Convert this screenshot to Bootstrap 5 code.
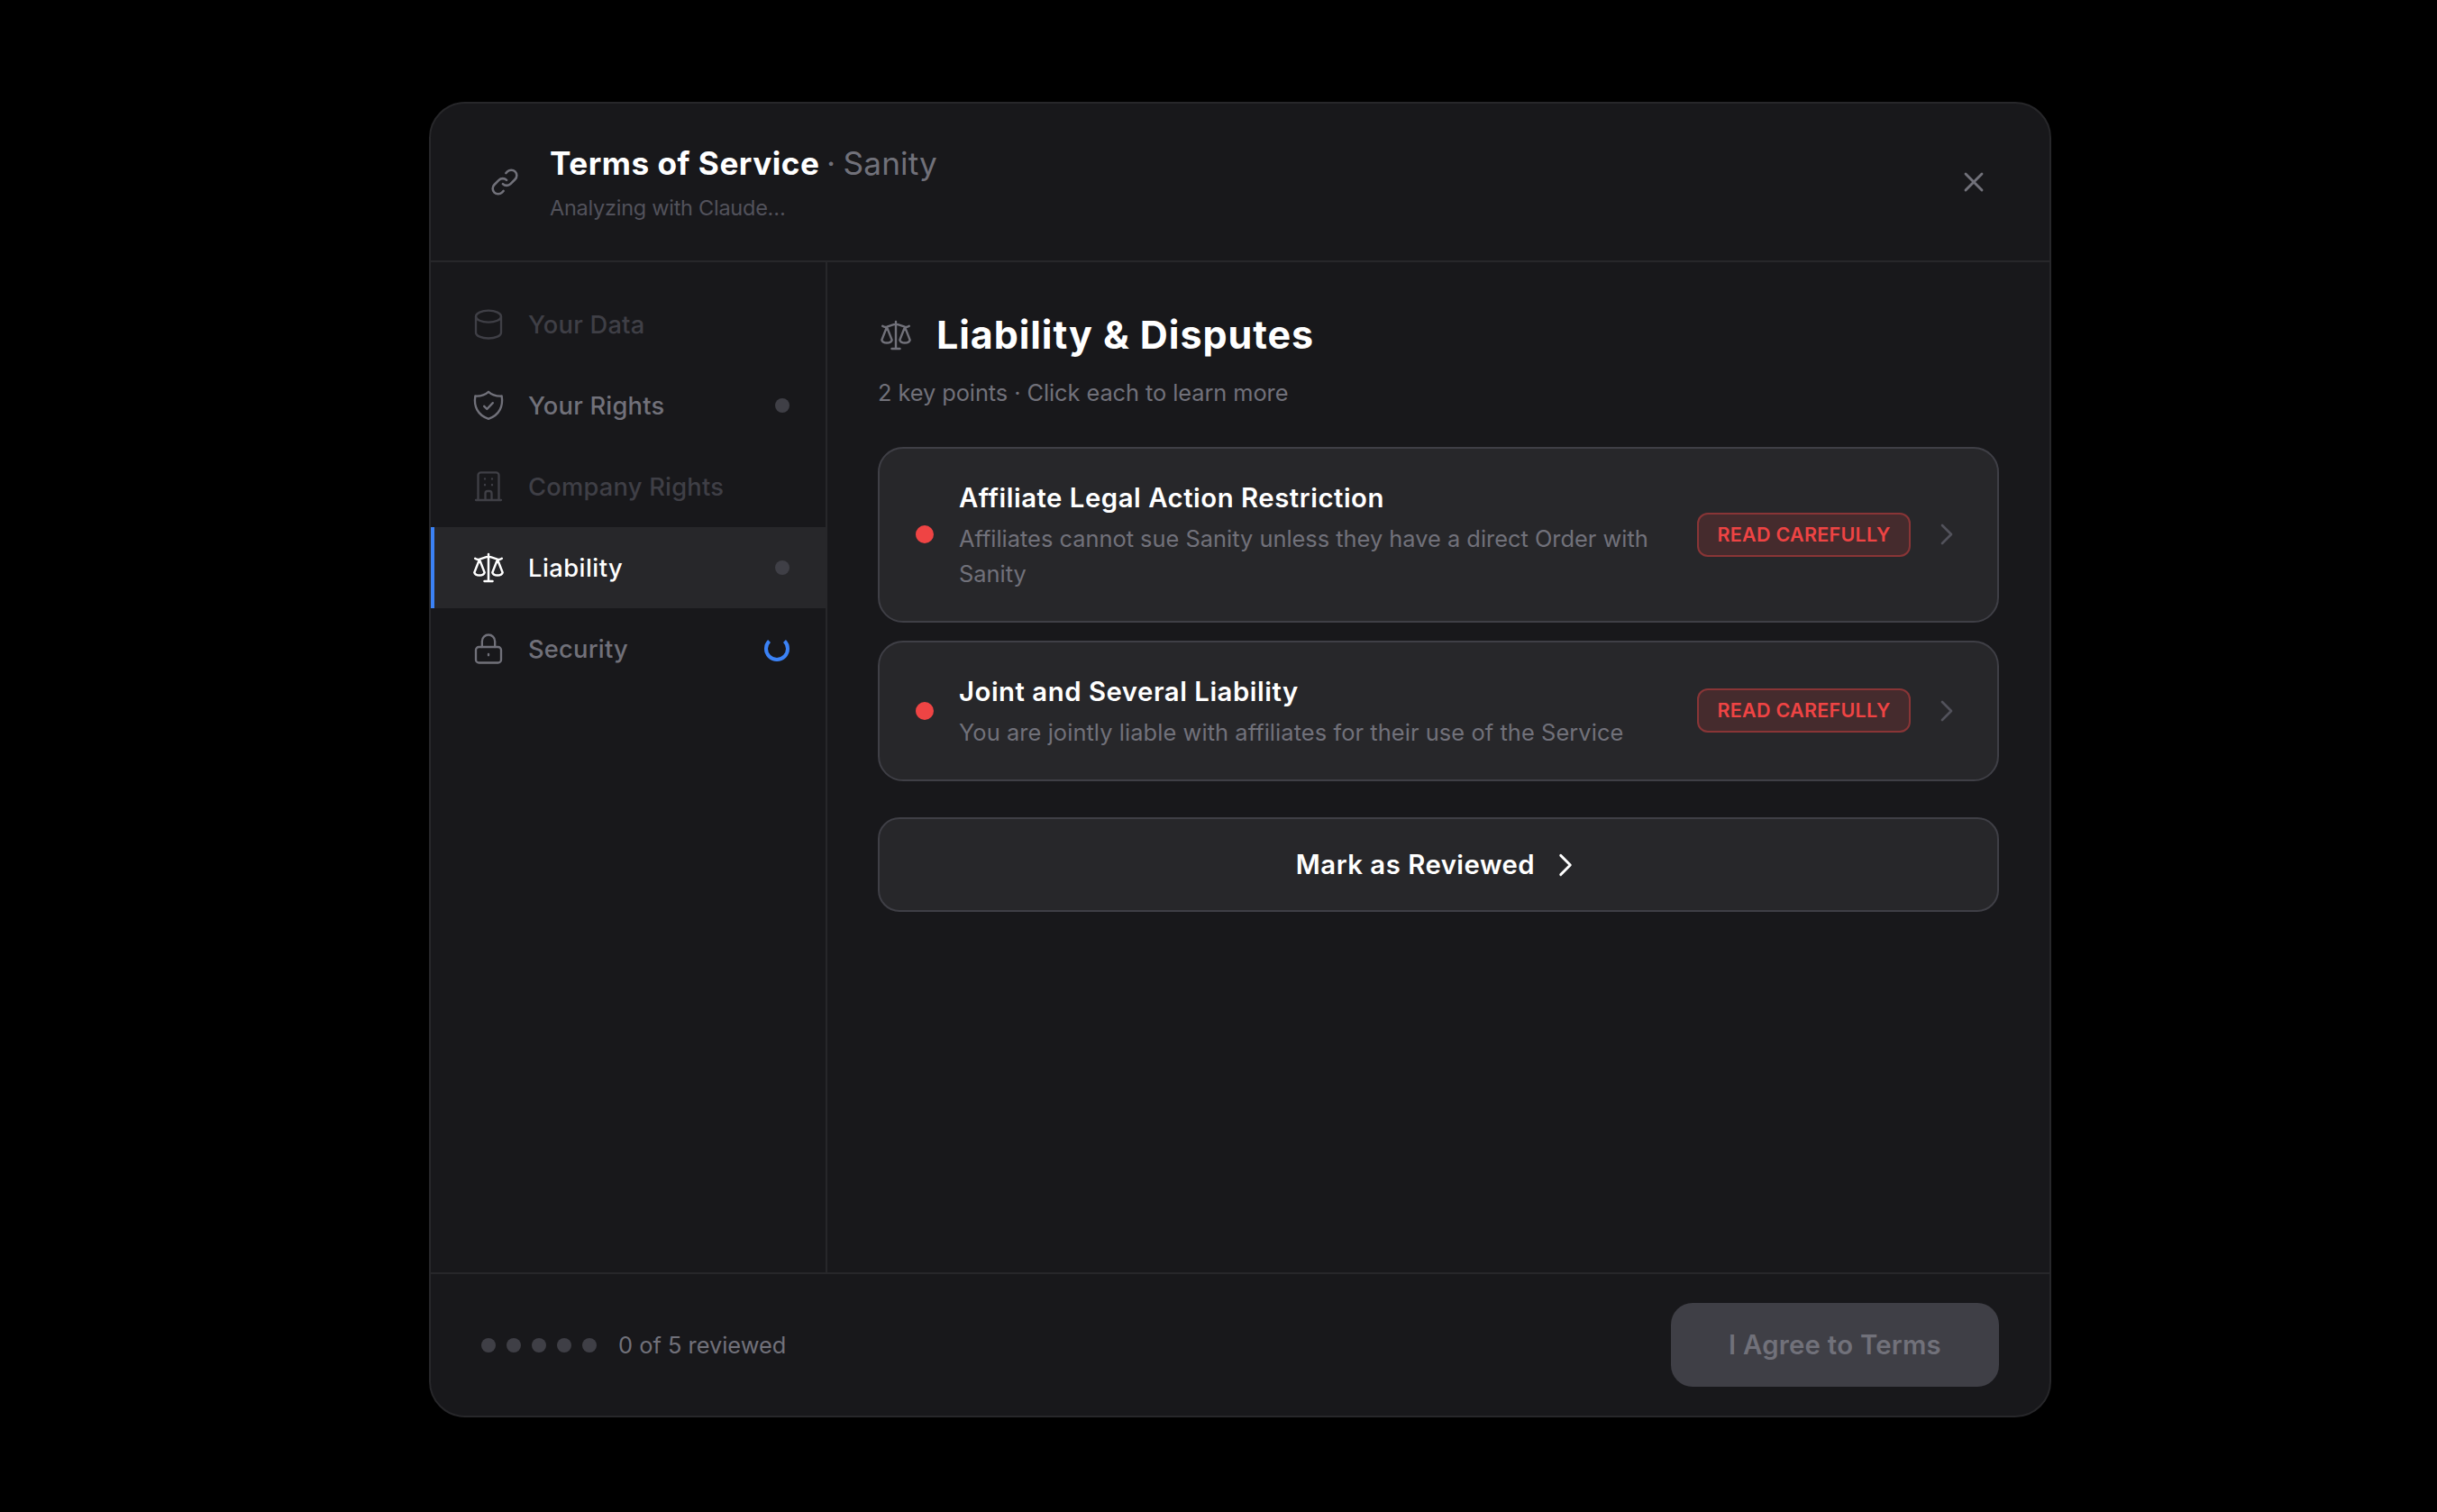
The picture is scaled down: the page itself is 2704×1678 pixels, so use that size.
<!DOCTYPE html>
<html lang="en" data-bs-theme="dark">
<head>
<meta charset="utf-8">
<meta name="viewport" content="width=device-width, initial-scale=1">
<title>Terms of Service · Sanity</title>
<link href="https://cdn.jsdelivr.net/npm/bootstrap@5.3.0/dist/css/bootstrap.min.css" rel="stylesheet">
<style>
  body { background: #000; font-family: Inter, "Liberation Sans", sans-serif; height: 1678px; overflow: hidden; padding: 113px 428px 0 476px; }
  svg { display: block; flex: none; fill: none; stroke: currentColor; stroke-linecap: round; stroke-linejoin: round; }
  .terms-dialog { width: 1800px; height: 1460px; background: #18181b; border: 2px solid #27272a; border-radius: 40px; overflow: hidden; }
  .dialog-top { height: 176px; padding: 0 56px; border-bottom: 2px solid #27272a; }
  .top-icon { padding: 8px; margin-right: 24px; color: #71717a; }
  .top-close { width: 56px; height: 56px; padding: 10px; border: 0; background: none; color: #71717a; }
  .dialog-title { font-size: 35.2px; line-height: 52px; font-weight: 700; color: #fff; letter-spacing: .5px; margin: 0 0 6px; }
  .dialog-title span { font-weight: 400; color: #71717a; letter-spacing: .1px; word-spacing: -1.5px; margin-left: -1.5px; }
  .dialog-status { font-size: 23.5px; line-height: 36px; color: #52525b; letter-spacing: -.26px; }
  .side-nav { width: 440px; padding-top: 24px; border-right: 2px solid #27272a; }
  .side-item { height: 90px; padding: 0 40px 0 44px; gap: 24px; color: #71717a; font-size: 27.3px; line-height: 42px; font-weight: 500; letter-spacing: .22px; text-decoration: none; }
  .side-item .flex-grow-1 { padding-top: 2px; }
  .side-item.is-off { color: #3f3f46; }
  .side-item.is-current { color: #fff; background: #27272a; border-left: 4px solid #3b82f6; padding-left: 40px; letter-spacing: .48px; }
  .pip { width: 16px; height: 16px; border-radius: 50%; background: #3f3f46; flex: none; }
  .load-ring { width: 28px; height: 28px; border-radius: 50%; border: 4px solid #3b82f6; border-top-color: transparent; }
  .detail-pane { padding: 48px 56px; }
  .pane-title { font-size: 43px; line-height: 64px; padding: 0 0 2px 1px; font-weight: 700; letter-spacing: .92px; color: #fff; margin: 0; }
  .pane-head { gap: 24px; color: #71717a; }
  .pane-sub { font-size: 25.4px; line-height: 39px; color: #71717a; letter-spacing: -.08px; margin: 11px 0 41px; }
  .point-card { background: #27272a; border: 2px solid #3f3f46; border-radius: 28px; padding: 32px 40px; margin-bottom: 20px; }
  .alert-pip { width: 20px; height: 20px; border-radius: 50%; background: #ef4444; flex: none; margin: 0 28px 1px 0; }
  .point-title { font-size: 29.3px; line-height: 45px; font-weight: 600; color: #fff; letter-spacing: .54px; margin: 0 0 3px; }
  .point-text { font-size: 25.4px; line-height: 39px; color: #71717a; margin: 0 0 1px; }
  .point-text.is-wide { letter-spacing: .08px; }
  .warn-tag { width: 237px; height: 49px; line-height: 45px; margin: 0 24px 1px 28px; border: 2px solid rgba(239,68,68,.4); border-radius: 12px; background: rgba(239,68,68,.15); color: #ef4444; font-size: 21.5px; font-weight: 600; letter-spacing: .28px; flex: none; }
  .point-arrow { color: #52525b; margin-bottom: 1px; }
  .review-btn { height: 105px; margin-top: 40px; border: 2px solid #3f3f46; border-radius: 24px; background: #27272a; color: #fff; font-size: 29.3px; line-height: 45px; font-weight: 600; letter-spacing: .5px; gap: 17px; }
  .dialog-foot { height: 159px; padding: 0 56px; border-top: 2px solid #27272a; }
  .foot-pips { gap: 12px; margin-right: 24px; }
  .foot-count { font-size: 25.4px; line-height: 39px; color: #71717a; padding-bottom: 1px; }
  .agree-btn { width: 364px; height: 93px; border: 0; border-radius: 24px; background: #3f3f46; color: #71717a; font-size: 29.3px; line-height: 45px; font-weight: 600; letter-spacing: .26px; }
</style>
</head>
<body>
<svg width="0" height="0" class="position-absolute" aria-hidden="true">
  <symbol id="scales" viewBox="0 0 24 24">
    <path d="M12 3v18M9.3 21h5.4M3.1 5.9c1 .7 2 .8 3 .5L12 4.4l5.9 2c1 .3 2 .2 3-.5M6 6.5 2.6 15.2c.4 1.3 1.8 1.9 3.4 1.9s3-.6 3.4-1.9zM18 6.5l-3.4 8.7c.4 1.3 1.8 1.9 3.4 1.9s3-.6 3.4-1.9z"/>
  </symbol>
  <symbol id="arrow-right" viewBox="0 0 24 24"><path d="m8.25 4.5 7.5 7.5-7.5 7.5"/></symbol>
</svg>

<main class="terms-dialog d-flex flex-column">
  <header class="dialog-top d-flex align-items-center">
    <div class="top-icon">
      <svg width="36" height="36" viewBox="0 0 24 24" stroke-width="1.7"><path d="M12.9 5.4 14 4.300a4 4 0 0 1 5.700 5.700l-3.400 3.400a4 4 0 0 1-5.700 0M11.100 18.600 10 19.700A4 4 0 0 1 4.300 14l3.400-3.400a4 4 0 0 1 5.700 0"/></svg>
    </div>
    <div class="flex-grow-1">
      <h1 class="dialog-title">Terms of Service <span>· Sanity</span></h1>
      <div class="dialog-status">Analyzing with Claude…</div>
    </div>
    <button class="top-close" aria-label="Close">
      <svg width="36" height="36" viewBox="0 0 24 24" stroke-width="1.9"><path d="M6 18 18 6M6 6l12 12"/></svg>
    </button>
  </header>

  <div class="d-flex flex-grow-1">
    <nav class="side-nav d-flex flex-column flex-shrink-0">
      <a class="side-item is-off d-flex align-items-center">
        <svg width="40" height="40" viewBox="0 0 24 24" stroke-width="1.4"><ellipse cx="12" cy="6.7" rx="8.4" ry="3.9"/><path d="M3.6 6.7v10.8c0 2.1 3.8 3.8 8.4 3.8s8.4-1.7 8.4-3.8V6.7"/></svg>
        <span class="flex-grow-1">Your Data</span>
      </a>
      <a class="side-item d-flex align-items-center">
        <svg width="40" height="40" viewBox="0 0 24 24" stroke-width="1.4"><path d="M12 2.9c-2.2 2-5.4 3-8.8 2.8-1.1 6.8 1.5 12.8 8.8 15.2 7.3-2.4 9.9-8.4 8.8-15.2C17.4 5.9 14.2 4.9 12 2.9z"/><path d="m9.1 12.5 1.9 1.9 3.9-4.1"/></svg>
        <span class="flex-grow-1">Your Rights</span>
        <span class="pip"></span>
      </a>
      <a class="side-item is-off d-flex align-items-center">
        <svg width="40" height="40" viewBox="0 0 24 24" stroke-width="1.4"><path d="M3.6 21h16.8M5.1 21V4.4a1.8 1.8 0 0 1 1.8-1.8h10.2a1.8 1.8 0 0 1 1.8 1.8V21M9.900 21v-4.500a1.500 1.500 0 0 1 1.500-1.500h1.200a1.500 1.500 0 0 1 1.500 1.500V21"/><path d="M9.6 6.8v.1M14.4 6.8v.1M9.6 10.8v.1M14.4 10.8v.1"/></svg>
        <span class="flex-grow-1">Company Rights</span>
      </a>
      <a class="side-item is-current d-flex align-items-center">
        <svg width="40" height="40" stroke-width="1.5"><use href="#scales"/></svg>
        <span class="flex-grow-1">Liability</span>
        <span class="pip"></span>
      </a>
      <a class="side-item d-flex align-items-center">
        <svg width="40" height="40" viewBox="0 0 24 24" stroke-width="1.4"><rect x="3.6" y="10.8" width="16.8" height="10.5" rx="2"/><path d="M7.7 10.8V7a4.3 4.3 0 0 1 8.6 0v3.8M12 15.5v.8"/></svg>
        <span class="flex-grow-1">Security</span>
        <span class="load-ring"></span>
      </a>
    </nav>

    <section class="detail-pane flex-grow-1">
      <div class="pane-head d-flex align-items-center">
        <svg width="40" height="40" stroke-width="1.45"><use href="#scales"/></svg>
        <h2 class="pane-title">Liability &amp; Disputes</h2>
      </div>
      <p class="pane-sub">2 key points · Click each to learn more</p>

      <article class="point-card d-flex align-items-center">
        <span class="alert-pip"></span>
        <div class="flex-grow-1">
          <h3 class="point-title">Affiliate Legal Action Restriction</h3>
          <p class="point-text">Affiliates cannot sue Sanity unless they have a direct Order with Sanity</p>
        </div>
        <span class="warn-tag text-center">READ CAREFULLY</span>
        <svg class="point-arrow" width="32" height="32" stroke-width="2"><use href="#arrow-right"/></svg>
      </article>

      <article class="point-card d-flex align-items-center">
        <span class="alert-pip"></span>
        <div class="flex-grow-1">
          <h3 class="point-title">Joint and Several Liability</h3>
          <p class="point-text is-wide">You are jointly liable with affiliates for their use of the Service</p>
        </div>
        <span class="warn-tag text-center">READ CAREFULLY</span>
        <svg class="point-arrow" width="32" height="32" stroke-width="2"><use href="#arrow-right"/></svg>
      </article>

      <button class="review-btn w-100 d-flex align-items-center justify-content-center">
        <span>Mark as Reviewed</span>
        <svg width="34" height="34" stroke-width="2"><use href="#arrow-right"/></svg>
      </button>
    </section>
  </div>

  <footer class="dialog-foot d-flex align-items-center">
    <div class="foot-pips d-flex">
      <span class="pip"></span><span class="pip"></span><span class="pip"></span><span class="pip"></span><span class="pip"></span>
    </div>
    <span class="foot-count flex-grow-1">0 of 5 reviewed</span>
    <button class="agree-btn">I Agree to Terms</button>
  </footer>
</main>
<script src="https://cdn.jsdelivr.net/npm/bootstrap@5.3.0/dist/js/bootstrap.bundle.min.js"></script>
</body>
</html>
